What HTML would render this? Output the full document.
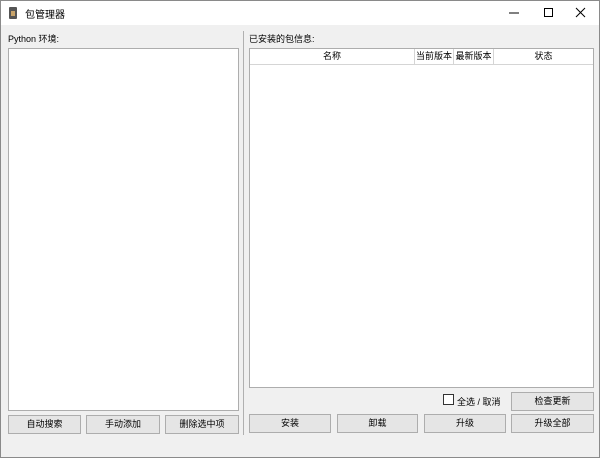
<!DOCTYPE html>
<html><head><meta charset="utf-8"><style>
*{margin:0;padding:0;box-sizing:border-box}
body{width:600px;height:458px;overflow:hidden;background:#f0f0f0;font-family:"Liberation Sans","Noto Sans CJK SC",sans-serif;font-size:9px;color:#000;position:relative;border:1px solid #8a8a8a}
.a{position:absolute}
.title{left:0;top:0;width:598px;height:24px;background:#fff}
.box{background:#fff;border:1px solid #adadad}
.btn{background:#e5e5e5;border:1px solid #adadad;text-align:center;line-height:17px;font-size:9px}
.hd{top:0;height:15px;line-height:15px;text-align:center;border-right:1px solid #d5d5d5;background:#fff}
</style></head><body>
<div class="a title">
 <div class="a" style="left:8px;top:6px;width:8px;height:12px;background:#555;border-radius:1px"></div>
 <div class="a" style="left:10px;top:10px;width:4px;height:5px;background:#c9a46a"></div>
 <div class="a" style="left:24px;top:5px;font-size:10px">包管理器</div>
 <svg class="a" style="left:500px;top:0" width="98" height="24">
  <line x1="8" y1="12" x2="18" y2="12" stroke="#000"/>
  <rect x="43.5" y="7.5" width="8" height="8" fill="none" stroke="#000"/>
  <path d="M75 7L84 16M84 7L75 16" stroke="#000"/>
 </svg>
</div>
<div class="a" style="left:7px;top:31px">Python 环境:</div>
<div class="a box" style="left:7px;top:47px;width:231px;height:363px"></div>
<div class="a" style="left:242px;top:30px;width:1px;height:404px;background:#b0b0b0"></div>
<div class="a" style="left:248px;top:31px">已安装的包信息:</div>
<div class="a box" style="left:248px;top:47px;width:345px;height:340px">
 <div class="a" style="left:0;top:0;width:343px;height:16px;border-bottom:1px solid #d5d5d5"></div>
 <div class="a hd" style="left:0;width:165px">名称</div>
 <div class="a hd" style="left:165px;width:39px">当前版本</div>
 <div class="a hd" style="left:204px;width:40px">最新版本</div>
 <div class="a hd" style="left:244px;width:99px;border-right:none">状态</div>
</div>
<div class="a btn" style="left:7px;top:414px;width:73px;height:19px">自动搜索</div>
<div class="a btn" style="left:85px;top:414px;width:74px;height:19px">手动添加</div>
<div class="a btn" style="left:164px;top:414px;width:74px;height:19px">删除选中项</div>
<div class="a" style="left:442px;top:393px;width:11px;height:11px;background:#fff;border:1px solid #333"></div>
<div class="a" style="left:456px;top:394px">全选 / 取消</div>
<div class="a btn" style="left:510px;top:391px;width:83px;height:19px">检查更新</div>
<div class="a btn" style="left:248px;top:413px;width:82px;height:19px">安装</div>
<div class="a btn" style="left:336px;top:413px;width:81px;height:19px">卸载</div>
<div class="a btn" style="left:423px;top:413px;width:82px;height:19px">升级</div>
<div class="a btn" style="left:510px;top:413px;width:83px;height:19px">升级全部</div>
</body></html>
